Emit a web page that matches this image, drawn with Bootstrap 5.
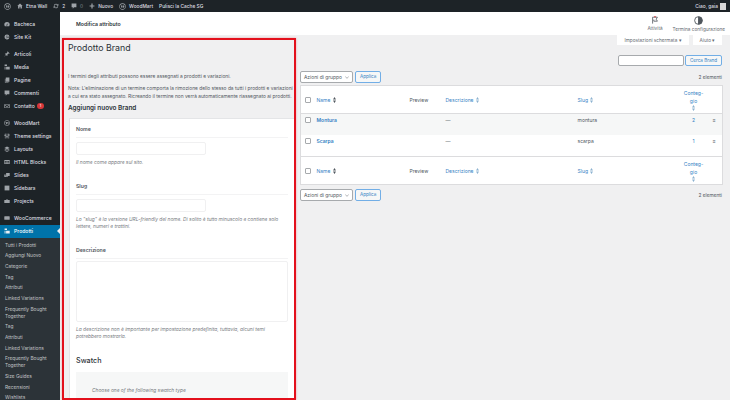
<!DOCTYPE html>
<html lang="it">
<head>
  <meta charset="UTF-8">
  <meta name="viewport" content="width=device-width, initial-scale=1.0">
  <title>Prodotto Brand</title>
  <link href="https://cdn.jsdelivr.net/npm/bootstrap@5.3.3/dist/css/bootstrap.min.css" rel="stylesheet">
  <style>
    html, body { height: 400px; overflow: hidden; }
    body { font-family: Inter, "Liberation Sans", sans-serif; font-size: 5px; line-height: 8px; color: #50575e; background: #f0f0f1; }
    a { color: #3582c4; text-decoration: none; }
    svg { display: block; flex: none; }

    .adminbar { height: 12px; background: #1d2327; color: #dcdde0; font-size: 4.8px; font-weight: 500; padding: 0 4px; }
    .adminbar .bar-gap { margin-left: 6px; }
    .adminbar .bar-after { margin-right: 3px; }
    .bar-icon { fill: #9ea3a8; }
    .avatar { width: 6px; height: 7px; background: #d8d8d8; margin-left: 2px; }

    .wrap { height: 388px; }
    .side { width: 60px; flex: none; background: #1d2327; color: #dcdde0; font-weight: 500; font-size: 5.1px; overflow: hidden; padding-top: 5.5px; }
    .mi { height: 13px; padding-left: 4px; gap: 4px; }
    .mi svg { fill: #9ea3a8; }
    .mi-gap { margin-top: 4px; }
    .mi-on { background: #0073aa; color: #fff; position: relative; }
    .mi-on svg { fill: #e8f0f5; }
    .mi-on::after { content: ""; position: absolute; right: 0; top: 3.5px; border: 3px solid transparent; border-right-color: #f0f0f1; border-left: 0; }
    .dot { width: 7px; height: 6px; border-radius: 3px; background: #d63638; color: #fff; font-size: 3.5px; line-height: 6px; text-align: center; margin-left: -2px; }
    .sub { background: #2c3338; color: #c3c4c7; font-size: 4.8px; font-weight: 400; padding: 2px 0 0 5px; line-height: 7px; }
    .sub div { padding: 2px 0 1.7px; }

    .topstrip { height: 23px; background: #fff; padding: 0 5px 0 16px; flex: none; }
    .topstrip b { font-weight: 600; font-size: 5.2px; color: #2c3338; }
    .tools { gap: 10px; }
    .tool { font-size: 4.7px; color: #646970; line-height: 6px; }
    .tool svg { margin: 0 auto 1px; }

    .left-col { width: 234px; flex: none; margin: 3px 0 0 2px; border: 2px solid #e3101c; box-shadow: 0 0 2px rgba(227, 16, 28, .35); overflow: hidden; padding: 0 0 0 4px; height: 362px; }
    .left-col h1 { font-size: 8.8px; line-height: 12px; font-weight: 400; color: #2c3338; margin: 2px 0 18px; }
    .left-col p { margin: 0 0 4px; white-space: nowrap; font-size: 4.85px; line-height: 8px; }
    .left-col h2 { font-size: 6.4px; line-height: 8px; font-weight: 600; color: #2c3338; margin: 0 0 6px; }
    .form-panel { background: #fff; border: 1px solid #e4e5e7; border-right: 0; margin-left: 1px; padding: 6px 6px 0 6px; height: 300px; }
    .fld-label { font-weight: 600; color: #50575e; padding-bottom: 4px; border-bottom: 1px solid #f3f3f4; margin-bottom: 2px; font-size: 5.2px; }
    .fld-input { width: 130px; height: 13px; border: 1px solid #f0f0f1; border-radius: 2px; margin-top: 4px; }
    .fld-area { height: 61px; border: 1px solid #f0f0f1; border-radius: 2px; }
    .fld-help { font-style: italic; color: #787c82; font-size: 4.85px; line-height: 7.6px; margin-top: 4px; white-space: nowrap; }
    .fld { margin-bottom: 15px; }
    .swatch-title { font-size: 7.2px; line-height: 10px; font-weight: 500; color: #2c3338; margin: 15px 0 6px; }
    .swatch-box { background: #f6f7f7; height: 40px; padding: 14px 16px; font-style: italic; color: #787c82; font-size: 4.85px; }

    .right-col { width: 422px; flex: none; margin-left: 4px; }
    .screen-tabs { height: 10px; gap: 4px; }
    .screen-tabs div { background: #fff; color: #646970; font-size: 4.7px; line-height: 10px; padding: 0 5px; text-align: center; white-space: nowrap; }
    .tab-a { width: 72px; } .tab-b { width: 29px; }
    .search-row { margin-top: 10px; height: 11px; gap: 1px; }
    .search-input { width: 66px; height: 11px; background: #fff; border: 1px solid #a7aaad; border-radius: 2px; }
    .wbtn { border: 1px solid #72aee6; border-radius: 2px; background: #f6f7f7; color: #3582c4; font-size: 4.6px; line-height: 10px; padding: 0 4px; height: 12px; }
    .search-row .wbtn { height: 11px; width: 37px; line-height: 9px; text-align: center; padding: 0; }
    .bulk { margin-top: 5px; height: 12px; gap: 2px; }
    .bulk-sel { width: 53px; height: 12px; background: #fff; border: 1px solid #a7aaad; border-radius: 2px; color: #50575e; font-size: 4.9px; padding: 0 3px; }
    .count { font-size: 4.8px; }
    .attr-table { width: 422px; table-layout: fixed; margin: 2px 0 4px; background: #fff; border: 1px solid #dcdcde; border-collapse: collapse; font-size: 5px; line-height: 8px; }
    .attr-table th, .attr-table td { padding: 0 0 0 2px; font-weight: 400; vertical-align: top; color: #50575e; }
    .attr-table th { height: 28px; vertical-align: middle; }
    .attr-table thead th { border-bottom: 1px solid #dcdcde; }
    .attr-table tfoot th { border-top: 1px solid #dcdcde; }
    .attr-table tbody td { height: 21.5px; padding-top: 2px; }
    .attr-table tbody tr:first-child td { background: #f6f7f7; }
    .attr-table strong { font-weight: 600; }
    .attr-table a { color: #3582c4; }
    .cbx { width: 6px; height: 6px; border: 1px solid #a7aaad; border-radius: 1px; background: #fff; margin: 1px 0 0 2px; }
    .sort-ico { display: inline-block; vertical-align: -1px; fill: #8cb2d0; margin-left: 1px; }
    .sort-on { fill: #50575e; }
    .ctr { text-align: center; }
    .ctr .sort-ico { margin: 0 auto; display: block; }
    .col-check { width: 14px; } .col-name { width: 93px; } .col-prev { width: 36px; } .col-desc { width: 132px; }
    .col-slug { width: 105px; } .col-count { width: 24px; } .col-more { width: 18px; }
  </style>
</head>
<body>
  <svg width="0" height="0" class="position-absolute">
    <symbol id="i-sort" viewBox="0 0 3 6"><path d="M1.500 0 3 2.400H0zM0 3.600h3L1.500 6z"/></symbol>
    <symbol id="i-chev" viewBox="0 0 6 4"><path d="M.5 .8 3 3.200 5.500 .8" fill="none" stroke="#50575e" stroke-width=".7"/></symbol>
    <symbol id="i-dash" viewBox="0 0 10 10"><path d="M5 1.500a4.500 4.500 0 0 0-4.500 4.500c0 1 .3 1.900.9 2.600h7.200c.6-.7.900-1.600.9-2.600A4.500 4.500 0 0 0 5 1.500zm2.300 2L5.600 6.400a.9.900 0 1 1-.8-.5z"/></symbol>
    <symbol id="i-pin" viewBox="0 0 10 10"><path d="M6 .5 9.500 4l-1 .5-1-.3-2 2 .3 1.600-.8.700-1.700-1.700L1 9l-.2-.2 2.200-2.400L1.300 4.700 2 4l1.600.3 2-2L5.500 1.500z"/></symbol>
    <symbol id="i-media" viewBox="0 0 10 10"><path d="M1 1h4v2.500H1zM3.500 4.500H9.500V9H3.500zM1 4.500h1.500V9H1z"/></symbol>
    <symbol id="i-page" viewBox="0 0 10 10"><path d="M3 1h6v7H3zM1.500 3H2.300v5.800H7.500v.7H1.500z"/></symbol>
    <symbol id="i-bubble" viewBox="0 0 10 10"><path d="M1 1h8v6H5L3 9.500V7H1z"/></symbol>
    <symbol id="i-mail" viewBox="0 0 10 10"><path d="M.5 2h9v6.500h-9zm1 1 3.500 2.600L8.500 3zm0 1.100V7.500h7V4.100L5 6.800z" fill-rule="evenodd"/></symbol>
    <symbol id="i-sliders" viewBox="0 0 10 10"><path d="M1.500 1h1v2h1v1.500h-1V9h-1V4.500h-1V3h1zM4.500 1h1v4.500h1V7h-1v2h-1V7h-1V5.500h1zM7.500 1h1v1.500h1V4h-1v5h-1V4h-1V2.500h1z"/></symbol>
    <symbol id="i-layers" viewBox="0 0 10 10"><path d="M5 1l4.500 2.200L5 5.400.5 3.200zM1.800 4.800 5 6.400l3.200-1.600 1.300.7L5 7.700.5 5.500zm0 2.300L5 8.700l3.200-1.600 1.300.6L5 9.900.5 7.700z"/></symbol>
    <symbol id="i-grid" viewBox="0 0 10 10"><path d="M.5 1.500h9v7h-9zm1 2v1.200h3V3.500zm4 0v1.200h3V3.500zm-4 2.200V7h3V5.700zm4 0V7h3V5.700z" fill-rule="evenodd"/></symbol>
    <symbol id="i-slides" viewBox="0 0 10 10"><path d="M3.500 1.500h6v5h-6zM.5 4h2.300v3.200H6.500V8.500H.5z"/></symbol>
    <symbol id="i-side" viewBox="0 0 10 10"><path d="M1 1h8v8H1z"/></symbol>
    <symbol id="i-case" viewBox="0 0 10 10"><path d="M3.500 2h3v1.200h3V8.500H.5V3.200h3zm.8.700v.5h1.400v-.5z" fill-rule="evenodd"/></symbol>
    <symbol id="i-woo" viewBox="0 0 10 10"><rect x=".5" y="2" width="9" height="6" rx="1"/></symbol>
    <symbol id="i-g" viewBox="0 0 10 10"><path d="M5 .8a4.200 4.200 0 1 0 4.100 5H5V4.500h4.100A4.200 4.200 0 0 0 5 .8zm0 1.500a2.700 2.700 0 0 1 1.800.7H5a2.700 2.700 0 0 0 0 4.400 2.700 2.700 0 0 1 0-5.100z"/></symbol>
    <symbol id="i-wp" viewBox="0 0 10 10"><path d="M5 .5a4.500 4.500 0 1 0 0 9 4.500 4.500 0 0 0 0-9zm0 .8a3.700 3.700 0 1 1 0 7.400 3.700 3.700 0 0 1 0-7.400zM2.500 3.500l1.700 4.500.9-2.700-.6-1.800zm2.700 0 1.600 4.500.8-2.600c.2-.9-.2-1.500-.5-1.900z" fill-rule="evenodd"/></symbol>
    <symbol id="i-home" viewBox="0 0 10 10"><path d="M5 1 .5 5.200h1.300V9h2.400V6.300h1.600V9h2.400V5.200h1.300z"/></symbol>
    <symbol id="i-sync" viewBox="0 0 10 10"><path d="M5 1.200A3.800 3.800 0 0 0 1.300 4.500h1.200A2.600 2.600 0 0 1 7 3.300L5.800 4.500H9V1.300L7.900 2.400A3.800 3.800 0 0 0 5 1.200zM1 5.500v3.200l1.100-1.100A3.800 3.800 0 0 0 8.700 5.500H7.500A2.600 2.600 0 0 1 3 6.700l1.200-1.200z"/></symbol>
    <symbol id="i-plus" viewBox="0 0 10 10"><path d="M4 1h2v3h3v2H6v3H4V6H1V4h3z"/></symbol>
  </svg>

  <div class="adminbar d-flex align-items-center">
    <svg width="7" height="7" class="bar-icon"><use href="#i-wp"/></svg>
    <svg width="6" height="6" class="bar-icon bar-gap bar-after"><use href="#i-home"/></svg><span>Etna Wall</span>
    <svg width="6" height="6" class="bar-icon bar-gap bar-after"><use href="#i-sync"/></svg><span>2</span>
    <svg width="6" height="6" class="bar-icon bar-gap bar-after"><use href="#i-bubble"/></svg><span class="text-secondary">0</span>
    <svg width="6" height="6" class="bar-icon bar-gap bar-after"><use href="#i-plus"/></svg><span>Nuovo</span>
    <svg width="7" height="7" class="bar-icon bar-gap bar-after"><use href="#i-wp"/></svg><span>WoodMart</span>
    <span class="bar-gap">Pulisci la Cache SG</span>
    <span class="ms-auto">Ciao, gaia</span><span class="avatar"></span>
  </div>

  <div class="wrap d-flex">
    <nav class="side">
      <div class="mi d-flex align-items-center"><svg width="6" height="6"><use href="#i-dash"/></svg>Bacheca</div>
      <div class="mi d-flex align-items-center"><svg width="6" height="6"><use href="#i-g"/></svg>Site Kit</div>
      <div class="mi mi-gap d-flex align-items-center"><svg width="6" height="6"><use href="#i-pin"/></svg>Articoli</div>
      <div class="mi d-flex align-items-center"><svg width="6" height="6"><use href="#i-media"/></svg>Media</div>
      <div class="mi d-flex align-items-center"><svg width="6" height="6"><use href="#i-page"/></svg>Pagine</div>
      <div class="mi d-flex align-items-center"><svg width="6" height="6"><use href="#i-bubble"/></svg>Commenti</div>
      <div class="mi d-flex align-items-center"><svg width="6" height="6"><use href="#i-mail"/></svg>Contatto<span class="dot">1</span></div>
      <div class="mi mi-gap d-flex align-items-center"><svg width="6" height="6"><use href="#i-wp"/></svg>WoodMart</div>
      <div class="mi d-flex align-items-center"><svg width="6" height="6"><use href="#i-sliders"/></svg>Theme settings</div>
      <div class="mi d-flex align-items-center"><svg width="6" height="6"><use href="#i-layers"/></svg>Layouts</div>
      <div class="mi d-flex align-items-center"><svg width="6" height="6"><use href="#i-grid"/></svg>HTML Blocks</div>
      <div class="mi d-flex align-items-center"><svg width="6" height="6"><use href="#i-slides"/></svg>Slides</div>
      <div class="mi d-flex align-items-center"><svg width="6" height="6"><use href="#i-side"/></svg>Sidebars</div>
      <div class="mi d-flex align-items-center"><svg width="6" height="6"><use href="#i-case"/></svg>Projects</div>
      <div class="mi mi-gap d-flex align-items-center"><svg width="6" height="6"><use href="#i-woo"/></svg>WooCommerce</div>
      <div class="mi mi-on d-flex align-items-center"><svg width="6" height="6"><use href="#i-media"/></svg>Prodotti</div>
      <div class="sub">
        <div>Tutti i Prodotti</div>
        <div>Aggiungi Nuovo</div>
        <div>Categorie</div>
        <div>Tag</div>
        <div>Attributi</div>
        <div>Linked Variations</div>
        <div>Frequently Bought Together</div>
        <div>Tag</div>
        <div>Attributi</div>
        <div>Linked Variations</div>
        <div>Frequently Bought Together</div>
        <div>Size Guides</div>
        <div>Recensioni</div>
        <div>Wishlists</div>
      </div>
    </nav>

    <div class="flex-grow-1 d-flex flex-column">
      <div class="topstrip d-flex align-items-center justify-content-between">
        <b>Modifica attributo</b>
        <div class="tools d-flex text-center">
          <div class="tool">
            <svg width="8" height="8" viewBox="0 0 10 10" fill="none" stroke="#50575e"><path d="M2 9.500V1.500h6L6.500 4 8 6.500H3.500V4.500"/><circle cx="5" cy="1" r="1" fill="#d63638" stroke="none"/></svg>
            Attività
          </div>
          <div class="tool">
            <svg width="9" height="9" viewBox="0 0 10 10" fill="none" stroke="#50575e"><circle cx="5" cy="5" r="4.300"/><path d="M5 1v8a4 4 0 0 0 0-8z" fill="#50575e"/></svg>
            Termina configurazione
          </div>
        </div>
      </div>

      <div class="d-flex flex-grow-1">
        <section class="left-col">
          <h1>Prodotto Brand</h1>
          <p>I termini degli attributi possono essere assegnati a prodotti e variazioni.</p>
          <p>Nota: L'eliminazione di un termine comporta la rimozione dello stesso da tutti i prodotti e variazioni<br>a cui era stato assegnato. Ricreando il termine non verrà automaticamente riassegnato ai prodotti.</p>
          <h2>Aggiungi nuovo Brand</h2>
          <div class="form-panel">
            <div class="fld">
              <div class="fld-label">Nome</div>
              <div class="fld-input"></div>
              <div class="fld-help">Il nome come appare sul sito.</div>
            </div>
            <div class="fld">
              <div class="fld-label">Slug</div>
              <div class="fld-input"></div>
              <div class="fld-help">Lo "slug" è la versione URL-friendly del nome. Di solito è tutto minuscolo e contiene solo<br>lettere, numeri e trattini.</div>
            </div>
            <div class="fld mb-0">
              <div class="fld-label">Descrizione</div>
              <div class="fld-area"></div>
              <div class="fld-help">La descrizione non è importante per impostazione predefinita, tuttavia, alcuni temi<br>potrebbero mostrarla.</div>
            </div>
            <div class="swatch-title">Swatch</div>
            <div class="swatch-box">Choose one of the following swatch type</div>
          </div>
        </section>

        <section class="right-col">
          <div class="screen-tabs d-flex justify-content-end">
            <div class="tab-a">Impostazioni schermata ▾</div>
            <div class="tab-b">Aiuto ▾</div>
          </div>
          <div class="search-row d-flex justify-content-end">
            <div class="search-input"></div>
            <div class="wbtn">Cerca Brand</div>
          </div>
          <div class="bulk d-flex align-items-center">
            <div class="bulk-sel d-flex align-items-center justify-content-between">Azioni di gruppo <svg width="4" height="3"><use href="#i-chev"/></svg></div>
            <div class="wbtn">Applica</div>
            <span class="count ms-auto">2 elementi</span>
          </div>
          <table class="attr-table">
            <colgroup><col class="col-check"><col class="col-name"><col class="col-prev"><col class="col-desc"><col class="col-slug"><col class="col-count"><col class="col-more"></colgroup>
            <thead>
              <tr>
                <th><div class="cbx"></div></th>
                <th><a href="#">Name</a> <svg class="sort-ico sort-on" width="3" height="6"><use href="#i-sort"/></svg></th>
                <th>Preview</th>
                <th><a href="#">Descrizione</a> <svg class="sort-ico" width="3" height="6"><use href="#i-sort"/></svg></th>
                <th><a href="#">Slug</a> <svg class="sort-ico" width="3" height="6"><use href="#i-sort"/></svg></th>
                <th class="ctr"><a href="#">Conteg-<br>gio</a><svg class="sort-ico" width="3" height="6"><use href="#i-sort"/></svg></th>
                <th></th>
              </tr>
            </thead>
            <tbody>
              <tr>
                <td><div class="cbx"></div></td>
                <td><a href="#"><strong>Montura</strong></a></td>
                <td></td>
                <td>—</td>
                <td>montura</td>
                <td class="ctr"><a href="#">2</a></td>
                <td class="ctr">≡</td>
              </tr>
              <tr>
                <td><div class="cbx"></div></td>
                <td><a href="#"><strong>Scarpa</strong></a></td>
                <td></td>
                <td>—</td>
                <td>scarpa</td>
                <td class="ctr"><a href="#">1</a></td>
                <td class="ctr">≡</td>
              </tr>
            </tbody>
            <tfoot>
              <tr>
                <th><div class="cbx"></div></th>
                <th><a href="#">Name</a> <svg class="sort-ico sort-on" width="3" height="6"><use href="#i-sort"/></svg></th>
                <th>Preview</th>
                <th><a href="#">Descrizione</a> <svg class="sort-ico" width="3" height="6"><use href="#i-sort"/></svg></th>
                <th><a href="#">Slug</a> <svg class="sort-ico" width="3" height="6"><use href="#i-sort"/></svg></th>
                <th class="ctr"><a href="#">Conteg-<br>gio</a><svg class="sort-ico" width="3" height="6"><use href="#i-sort"/></svg></th>
                <th></th>
              </tr>
            </tfoot>
          </table>
          <div class="bulk d-flex align-items-center mt-0">
            <div class="bulk-sel d-flex align-items-center justify-content-between">Azioni di gruppo <svg width="4" height="3"><use href="#i-chev"/></svg></div>
            <div class="wbtn">Applica</div>
            <span class="count ms-auto">2 elementi</span>
          </div>
        </section>
      </div>
    </div>
  </div>
  <script src="https://cdn.jsdelivr.net/npm/bootstrap@5.3.3/dist/js/bootstrap.bundle.min.js"></script>
</body>
</html>
